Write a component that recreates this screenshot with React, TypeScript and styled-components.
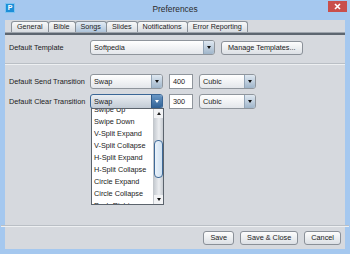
import React from 'react';
import styled, { createGlobalStyle } from 'styled-components';

const Global = createGlobalStyle`
  html, body { margin: 0; padding: 0; width: 350px; height: 254px; overflow: hidden; }
  body { font-family: "Liberation Sans", Arial, sans-serif; color: #1b1b1b; }
  * { box-sizing: border-box; }
`;

const Window = styled.div`
  width: 350px;
  height: 254px;
  background: #a5c8ef;
  display: flex;
  flex-direction: column;
`;

const TitleBar = styled.div`
  height: 20px;
  display: grid;
  grid-template-columns: 1fr auto 1fr;
  align-items: start;
`;

const AppIcon = styled.div`
  margin: 3px 0 0 5px;
  width: 10px;
  height: 10px;
  background: #1c8fd9;
  border: 1px solid #7fc3f0;
  color: #fff;
  font-size: 7px;
  font-weight: bold;
  line-height: 8px;
  text-align: center;
`;

const Title = styled.div`
  font-size: 8.4px;
  color: #2b2b2b;
  margin-top: 4px;
  line-height: 10px;
`;

const CloseBtn = styled.div`
  justify-self: end;
  margin: 1px 3px 0 0;
  width: 19px;
  height: 11px;
  background: #c94f4b;
  display: flex;
  align-items: center;
  justify-content: center;
`;

const Body = styled.div`
  flex: 1;
  margin: 0 5px 5px;
  background: #d6d9de;
  display: flex;
  flex-direction: column;
`;

const TabRow = styled.div`
  display: flex;
  padding: 1px 0 0 6px;
  height: 12px;
`;

const Tab = styled.div<{ $active?: boolean }>`
  height: 11px;
  padding: 0 5px;
  margin-right: -1px;
  border: 1px solid #8a9199;
  border-bottom: none;
  border-radius: 3px 3px 0 0;
  font-size: 7.2px;
  line-height: 10px;
  color: #1e1e1e;
  white-space: nowrap;
  background: ${p => (p.$active ? 'linear-gradient(#e2ebf4, #aec4da)' : 'linear-gradient(#f8f9fa, #d8dce1)')};
`;

const TabRule = styled.div`
  height: 3px;
  border-top: 1px solid #9ea5ad;
  background: #5d6670;
`;

const Panel = styled.div`
  flex: 1;
  display: flex;
  flex-direction: column;
  padding: 5px 4px 0;
`;

const Row = styled.div<{ $top?: number }>`
  display: flex;
  align-items: center;
  height: 15px;
  gap: 6px;
  margin-top: ${p => p.$top ?? 0}px;
`;

const Label = styled.div`
  width: 75px;
  font-size: 7.3px;
  white-space: nowrap;
`;

const Separator = styled.div<{ $top?: number }>`
  height: 2px;
  margin: ${p => p.$top ?? 0}px -4px 0;
  border-top: 1px solid #babfc5;
  background: #eef0f2;
`;

const ComboBox = styled.div<{ $w: number; $focused?: boolean }>`
  position: relative;
  width: ${p => p.$w}px;
  height: 15px;
  display: flex;
  border: 1px solid ${p => (p.$focused ? '#3a6696' : '#8f959c')};
  border-radius: 3px;
  background: ${p => (p.$focused ? 'linear-gradient(#e9edf2, #c2cbd5)' : 'linear-gradient(#ffffff, #e4e7eb)')};
`;

const ComboText = styled.div`
  flex: 1;
  padding-left: 3px;
  font-size: 7.3px;
  line-height: 13px;
  white-space: nowrap;
  overflow: hidden;
`;

const ArrowBtn = styled.div<{ $focused?: boolean }>`
  width: 11px;
  display: flex;
  align-items: center;
  justify-content: center;
  border-left: 1px solid ${p => (p.$focused ? '#2f5987' : '#93a5b7')};
  border-radius: 0 2px 2px 0;
  background: ${p => (p.$focused ? 'linear-gradient(#6a98c6, #2e5f93)' : 'linear-gradient(#dfe8f1, #9fb5ca)')};
`;

const Tri = styled.div<{ $light?: boolean; $up?: boolean }>`
  width: 0;
  height: 0;
  border-left: 2.5px solid transparent;
  border-right: 2.5px solid transparent;
  ${p =>
    p.$up
      ? `border-bottom: 3px solid ${p.$light ? '#fff' : '#222'};`
      : `border-top: 3px solid ${p.$light ? '#fff' : '#111'};`}
`;

const Field = styled.div`
  width: 24px;
  height: 15px;
  border: 1px solid #8f959c;
  background: #fff;
  padding-left: 3px;
  font-size: 7.3px;
  line-height: 13px;
`;

const Button = styled.div`
  height: 14px;
  padding: 0 6px;
  border: 1px solid #8a9098;
  border-radius: 3px;
  background: linear-gradient(#fdfdfd, #dce0e5);
  font-size: 7.3px;
  line-height: 12px;
  white-space: nowrap;
`;

const Popup = styled.div`
  position: absolute;
  top: 100%;
  left: 0;
  width: 73px;
  height: 97px;
  background: #fff;
  border: 1px solid #5b636c;
  display: flex;
  z-index: 5;
`;

const ListItems = styled.div`
  flex: 1;
  overflow: hidden;
  display: flex;
  flex-direction: column;
`;

const ListInner = styled.div`
  margin-top: -5px;
`;

const Item = styled.div`
  height: 12px;
  line-height: 12px;
  padding-left: 2px;
  font-size: 7.3px;
  white-space: nowrap;
`;

const ScrollBar = styled.div`
  width: 10px;
  display: flex;
  flex-direction: column;
  border-left: 1px solid #c3c7cc;
  background: linear-gradient(90deg, #c6cbd1, #ebedf0 55%, #c6cbd1);
`;

const ScrollArrow = styled.div`
  height: 9px;
  display: flex;
  align-items: center;
  justify-content: center;
  background: #f2f3f5;
`;

const Track = styled.div`
  flex: 1;
  display: flex;
  flex-direction: column;
`;

const Thumb = styled.div<{ $top: number; $h: number }>`
  margin-top: ${p => p.$top}px;
  height: ${p => p.$h}px;
  background: linear-gradient(90deg, #eaf2fa, #cfe1f2);
  border: 1px solid #3f6a98;
  border-radius: 4px;
`;

const Footer = styled.div`
  display: flex;
  flex-direction: column;
`;

const ButtonRow = styled.div`
  display: flex;
  justify-content: flex-end;
  gap: 6px;
  padding: 4px 4px 4px;
`;

const Combo: React.FC<{ w: number; value: string; focused?: boolean; children?: React.ReactNode }> = ({
  w,
  value,
  focused,
  children,
}) => (
  <ComboBox $w={w} $focused={focused}>
    <ComboText>{value}</ComboText>
    <ArrowBtn $focused={focused}>
      <Tri $light={focused} />
    </ArrowBtn>
    {children}
  </ComboBox>
);

const items = [
  'Swipe Up',
  'Swipe Down',
  'V-Split Expand',
  'V-Split Collapse',
  'H-Split Expand',
  'H-Split Collapse',
  'Circle Expand',
  'Circle Collapse',
  'Push Right',
];

export default function App() {
  return (
    <>
      <Global />
      <Window>
        <TitleBar>
          <AppIcon>P</AppIcon>
          <Title>Preferences</Title>
          <CloseBtn>
            <svg width="7" height="7" viewBox="0 0 7 7">
              <path d="M1 1 L6 6 M6 1 L1 6" stroke="#fff" strokeWidth="1.6" />
            </svg>
          </CloseBtn>
        </TitleBar>
        <Body>
          <TabRow>
            <Tab>General</Tab>
            <Tab>Bible</Tab>
            <Tab $active>Songs</Tab>
            <Tab>Slides</Tab>
            <Tab>Notifications</Tab>
            <Tab>Error Reporting</Tab>
          </TabRow>
          <TabRule />
          <Panel>
            <Row>
              <Label>Default Template</Label>
              <Combo w={125} value="Softpedia" />
              <Button>Manage Templates...</Button>
            </Row>
            <Separator $top={8} />
            <Row $top={9}>
              <Label>Default Send Transition</Label>
              <Combo w={73} value="Swap" />
              <Field>400</Field>
              <Combo w={57} value="Cubic" />
            </Row>
            <Row $top={5}>
              <Label>Default Clear Transition</Label>
              <Combo w={73} value="Swap" focused>
                <Popup>
                  <ListItems>
                    <ListInner>
                      {items.map(t => (
                        <Item key={t}>{t}</Item>
                      ))}
                    </ListInner>
                  </ListItems>
                  <ScrollBar>
                    <ScrollArrow>
                      <Tri $up />
                    </ScrollArrow>
                    <Track>
                      <Thumb $top={22} $h={38} />
                    </Track>
                    <ScrollArrow>
                      <Tri />
                    </ScrollArrow>
                  </ScrollBar>
                </Popup>
              </Combo>
              <Field>300</Field>
              <Combo w={57} value="Cubic" />
            </Row>
          </Panel>
          <Footer>
            <Separator />
            <ButtonRow>
              <Button>Save</Button>
              <Button>Save &amp; Close</Button>
              <Button>Cancel</Button>
            </ButtonRow>
          </Footer>
        </Body>
      </Window>
    </>
  );
}
